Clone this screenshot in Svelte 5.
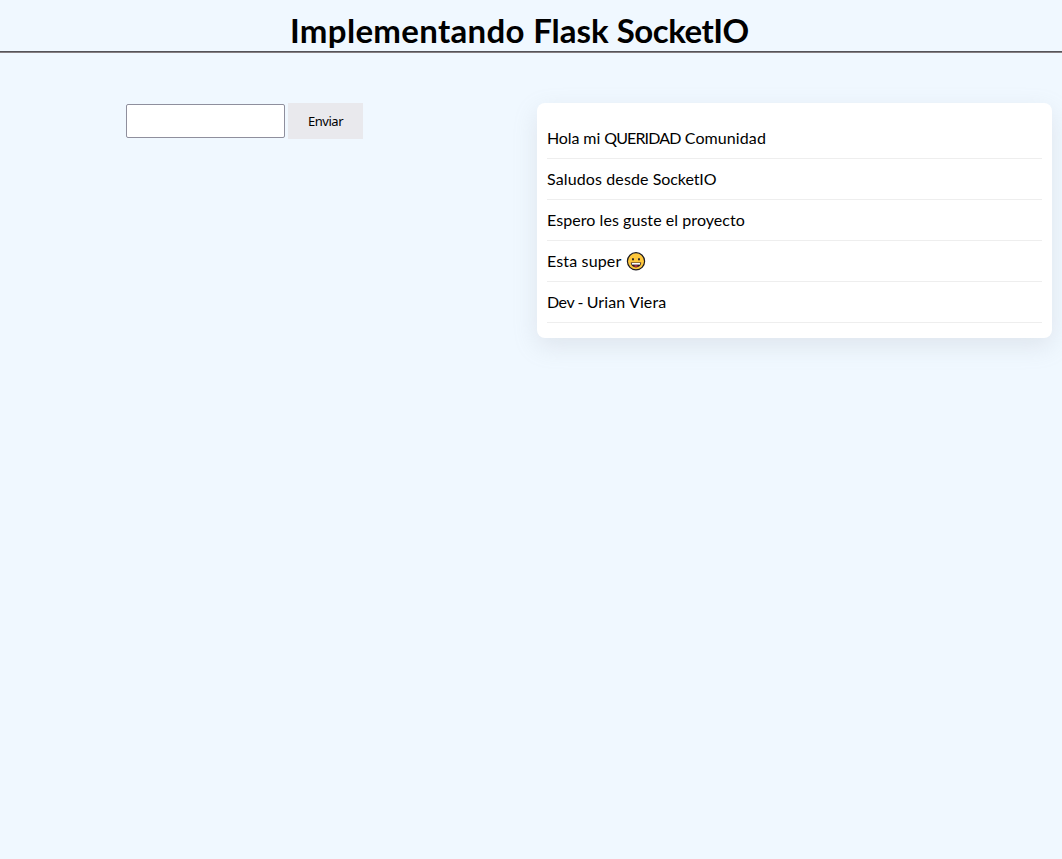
<script>
  const title = [
    { text: 'Implementando ', spacing: 0.32 },
    { text: 'Flask ', spacing: 0 },
    { text: 'SocketIO', spacing: -0.5 }
  ];
  const messages = [
    { parts: [{ text: 'Hola mi ', spacing: -0.1 }, { text: 'QUERIDAD', spacing: -0.85 }, { text: ' Comunidad', spacing: 0.1 }] },
    { parts: [{ text: 'Saludos desde ', spacing: 0.12 }, { text: 'SocketIO', spacing: -0.1 }] },
    { parts: [{ text: 'Espero les guste el proyecto', spacing: 0.06 }] },
    { parts: [{ text: 'Esta super', spacing: 0.15 }], smile: true },
    { parts: [{ text: 'Dev - ', spacing: -0.45 }, { text: 'Urian Viera', spacing: 0.12 }] }
  ];
  let draft = $state('');
</script>

<header>
  <h1>{#each title as word}<span style="letter-spacing: {word.spacing}px">{word.text}</span>{/each}</h1>
</header>
<main>
  <form onsubmit={(e) => e.preventDefault()}>
    <input type="text" bind:value={draft} aria-label="Mensaje" />
    <button>Enviar</button>
  </form>
  <ul>
    {#each messages as m}
      <li>
        <span class="message">{#each m.parts as part}<span style="letter-spacing: {part.spacing}px">{part.text}</span>{/each}</span>
        {#if m.smile}
          <svg width="20" height="20" viewBox="0 0 20 20" role="img" aria-label="😀">
            <circle cx="10" cy="10.3" r="8.6" fill="#ffc83d" stroke="#1c1a20" stroke-width="1.2" />
            <ellipse cx="7" cy="8.2" rx="0.9" ry="1.3" fill="#221d22" />
            <ellipse cx="13" cy="8.2" rx="0.9" ry="1.3" fill="#221d22" />
            <path d="M4.8 11.5h10.4c0 2.8-2.2 4.9-5.2 4.9s-5.2-2.1-5.2-4.9z" fill="#2b1b20" />
            <path d="M5.8 12h8.4v1.6H5.8z" fill="#fff" />
            <path d="M7.8 15.1c1.2-1 3.2-1 4.4 0-1.2.9-3.2.9-4.4 0z" fill="#e8384f" />
          </svg>
        {/if}
      </li>
    {/each}
  </ul>
</main>

<style>
  :global(body) { margin: 0; background: #f0f8ff; color: #000; font-family: Lato, sans-serif; }
  header { box-sizing: border-box; height: 53px; padding-top: 10px; border-bottom: 1px solid #857f82; box-shadow: inset 0 -1px #555459; }
  h1 { margin: 0 0 0 290px; font-size: 33px; line-height: 40px; font-weight: 700; white-space: pre; }
  main { box-sizing: border-box; min-height: calc(100vh - 53px); display: grid; grid-template-columns: 527px 515px; column-gap: 10px; padding-top: 50px; align-items: start; }
  form { display: flex; align-items: center; gap: 3px; padding-left: 126px; }
  input { box-sizing: border-box; width: 159px; height: 34px; margin: 0; padding: 1px 8px; background: #fff; border: 1px solid #8f8f9d; border-radius: 2px; outline: none; }
  button { width: 75px; height: 36px; margin: 0; padding: 0; border: 0; background: #e9e9ed; color: #000; font: 13px "Noto Sans", sans-serif; letter-spacing: -0.45px; }
  ul { box-sizing: border-box; height: 235px; margin: 0; padding: 15px 10px; list-style: none; background: #fff; border-radius: 8px; box-shadow: rgba(149, 157, 165, 0.2) 0 8px 24px; }
  li { box-sizing: border-box; height: 41px; display: flex; align-items: center; gap: 5px; border-bottom: 1px solid #eee; font-size: 16px; line-height: 20px; }
  .message { white-space: pre; }
</style>
